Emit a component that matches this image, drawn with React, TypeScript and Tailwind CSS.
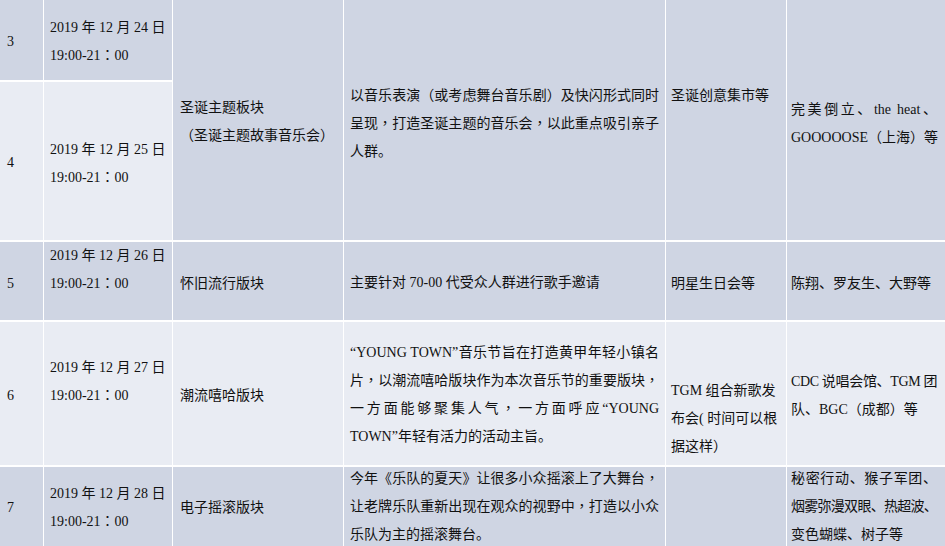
import type { ReactNode } from "react";

// schedule table (rows 3-7), cut to the window
const dark = "bg-[#cfd5e3]";
const light = "bg-[#e9ecf3]";

// the doc centres ， ： （ ） in their box, which is the TC glyph form
const fix = (text: string) =>
  text.split(/([，：（）])/).map((part, i) =>
    /^[，：（）]$/.test(part) ? (
      <span key={i} className="font-['Noto_Sans_CJK_TC',serif] leading-[0]">
        {part}
      </span>
    ) : (
      part
    )
  );

const Cell = ({ bg, className = "", children }: { bg: string; className?: string; children?: ReactNode }) => (
  <div className={`${bg} ${className}`}>{children}</div>
);

// full line, spread to the cell width like Word's justify
const J = ({ children, className = "" }: { children: string; className?: string }) => (
  <div className={`h-[28px] whitespace-nowrap [text-align-last:justify] ${className}`}>{fix(children)}</div>
);

const L = ({ children, className = "" }: { children: string; className?: string }) => (
  <div className={`h-[28px] whitespace-nowrap ${className}`}>{fix(children)}</div>
);

const Date = ({ day }: { day: string }) => (
  <>
    <L>{`2019 年 12 月 ${day} 日`}</L>
    <L>19:00-21：00</L>
  </>
);

export default function App() {
  return (
    <div className="h-[546px] w-[945px] overflow-hidden bg-white">
      <div className="grid grid-cols-[43px_128px_170px_321px_120px_158px] grid-rows-[80px_158px_78px_143px_80px] gap-x-px gap-y-[2px] font-['Liberation_Serif','Noto_Sans_CJK_SC',serif] text-[14px] leading-[28px] text-[#111]">
        {/* row 3 + merged christmas block */}
        <Cell bg={dark} className="pl-[7px] pt-[28px]">3</Cell>
        <Cell bg={dark} className="pl-[6px] pt-[14px]">
          <Date day="24" />
        </Cell>
        <Cell bg={dark} className="row-span-2 pl-[7px] pt-[94px]">
          <L>圣诞主题板块</L>
          <L>（圣诞主题故事音乐会）</L>
        </Cell>
        <Cell bg={dark} className="row-span-2 pl-[6px] pr-[6px] pt-[82px]">
          <J>以音乐表演（或考虑舞台音乐剧）及快闪形式同时</J>
          <J>呈现，打造圣诞主题的音乐会，以此重点吸引亲子</J>
          <L>人群。</L>
        </Cell>
        <Cell bg={dark} className="row-span-2 pl-[5px] pr-[11px] pt-[82px]">
          <L>圣诞创意集市等</L>
        </Cell>
        <Cell bg={dark} className="row-span-2 pl-[4px] pr-[8px] pt-[96px]">
          <J>完美倒立、the heat、</J>
          <J>GOOOOOSE（上海）等</J>
        </Cell>

        {/* row 4 */}
        <Cell bg={light} className="pl-[7px] pt-[67px]">4</Cell>
        <Cell bg={light} className="pl-[6px] pt-[54px]">
          <Date day="25" />
        </Cell>

        {/* row 5 */}
        <Cell bg={dark} className="pl-[7px] pt-[28px]">5</Cell>
        <Cell bg={dark} className="pl-[6px]">
          <Date day="26" />
        </Cell>
        <Cell bg={dark} className="pl-[7px] pt-[28px]">
          <L>怀旧流行版块</L>
        </Cell>
        <Cell bg={dark} className="pl-[6px] pt-[27px]">
          <L>主要针对 70-00 代受众人群进行歌手邀请</L>
        </Cell>
        <Cell bg={dark} className="pl-[5px] pt-[28px]">
          <L>明星生日会等</L>
        </Cell>
        <Cell bg={dark} className="pl-[4px] pt-[28px]">
          <L>陈翔、罗友生、大野等</L>
        </Cell>

        {/* row 6 */}
        <Cell bg={light} className="pl-[7px] pt-[60px]">6</Cell>
        <Cell bg={light} className="pl-[6px] pt-[32px]">
          <Date day="27" />
        </Cell>
        <Cell bg={light} className="pl-[7px] pt-[60px]">
          <L>潮流嘻哈版块</L>
        </Cell>
        <Cell bg={light} className="pl-[6px] pr-[6px] pt-[17px]">
          <J>“YOUNG TOWN”音乐节旨在打造黄甲年轻小镇名</J>
          <J>片，以潮流嘻哈版块作为本次音乐节的重要版块，</J>
          <J>一方面能够聚集人气，一方面呼应“YOUNG</J>
          <L>TOWN”年轻有活力的活动主旨。</L>
        </Cell>
        <Cell bg={light} className="pl-[5px] pr-[11px] pt-[55px]">
          <J>TGM 组合新歌发</J>
          <J>布会( 时间可以根</J>
          <L>据这样）</L>
        </Cell>
        <Cell bg={light} className="pl-[4px] pr-[8px] pt-[46px]">
          <J className="tracking-[-0.4px]">CDC 说唱会馆、TGM 团</J>
          <L>队、BGC（成都）等</L>
        </Cell>

        {/* row 7 */}
        <Cell bg={dark} className="pl-[7px] pt-[27px]">7</Cell>
        <Cell bg={dark} className="pl-[6px] pt-[13px]">
          <Date day="28" />
        </Cell>
        <Cell bg={dark} className="pl-[7px] pt-[27px]">
          <L>电子摇滚版块</L>
        </Cell>
        <Cell bg={dark} className="pl-[6px] pr-[6px]">
          <div className="-mt-[2px]">
            <J>今年《乐队的夏天》让很多小众摇滚上了大舞台，</J>
            <J>让老牌乐队重新出现在观众的视野中，打造以小众</J>
            <L>乐队为主的摇滚舞台。</L>
          </div>
        </Cell>
        <Cell bg={dark} />
        <Cell bg={dark} className="pl-[4px] pr-[8px]">
          <div className="-mt-[2px]">
            <J>秘密行动、猴子军团、</J>
            <J className="tracking-[-0.8px]">烟雾弥漫双眼、热超波、</J>
            <L>变色蝴蝶、树子等</L>
          </div>
        </Cell>
      </div>
    </div>
  );
}
